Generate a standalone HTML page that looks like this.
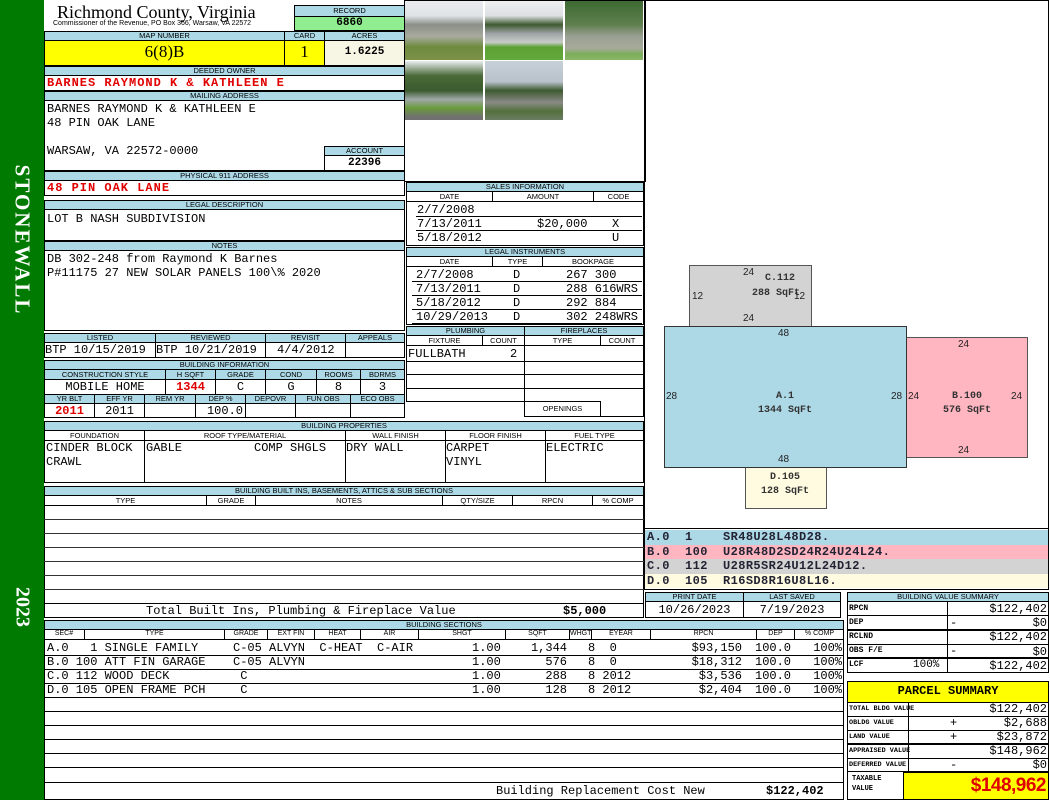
<!DOCTYPE html>
<html><head><meta charset="utf-8"><style>
*{margin:0;padding:0;box-sizing:border-box}
body{width:1050px;height:800px;background:#fff;position:relative;overflow:hidden;font-family:"Liberation Sans",sans-serif}
.a{position:absolute}
.b{position:absolute;border:1px solid #000}
.h{position:absolute;background:#add8e6;border:1px solid #000;font-size:7.5px;line-height:8px;text-align:center;color:#000;white-space:nowrap;overflow:hidden}
.m{position:absolute;font-family:"Liberation Mono",monospace;font-size:12px;line-height:14px;white-space:pre;color:#000}
.r{color:#e00000;font-weight:bold}
.l{position:absolute;background:#000}
.s{position:absolute;font-family:"Liberation Mono",monospace;font-size:8px;font-weight:bold;line-height:14px;white-space:pre}
.d{position:absolute;font-size:10px;color:#222;white-space:pre;line-height:12px}
.dm{position:absolute;font-family:"Liberation Mono",monospace;font-size:10px;font-weight:bold;color:#333;white-space:pre;line-height:12px;text-align:center}
</style></head><body>
<div class="a" style="left:0;top:0;width:44px;height:800px;background:#007a00"></div>
<div class="a" style="left:22px;top:240px;transform:translate(-50%,-50%) rotate(90deg);color:#fff;font-family:'Liberation Serif',serif;font-size:21px;font-weight:bold;letter-spacing:2px;white-space:nowrap">STONEWALL</div>
<div class="a" style="left:22px;top:607px;transform:translate(-50%,-50%) rotate(90deg);color:#fff;font-family:'Liberation Serif',serif;font-size:20px;font-weight:bold;white-space:nowrap">2023</div>

<div class="a" style="left:57px;top:2px;font-family:'Liberation Serif',serif;font-size:18px;line-height:20px">Richmond County, Virginia</div>
<div class="a" style="left:53px;top:20px;font-size:7px;line-height:8px;white-space:nowrap">Commissioner of the Revenue, PO Box 366, Warsaw, VA 22572</div>
<div class="h" style="left:294px;top:5px;width:111px;height:12px;line-height:10px">RECORD</div>
<div class="b" style="left:294px;top:16px;width:111px;height:15px;background:#90ee90"></div>
<div class="m" style="left:294px;top:16px;width:111px;text-align:center;font-weight:bold;font-size:11px">6860</div>
<div class="h" style="left:44px;top:31px;width:241px;height:10px">MAP NUMBER</div>
<div class="h" style="left:284px;top:31px;width:41px;height:10px">CARD</div>
<div class="h" style="left:324px;top:31px;width:81px;height:10px">ACRES</div>
<div class="b" style="left:44px;top:40px;width:241px;height:26px;background:#ffff00"></div>
<div class="b" style="left:284px;top:40px;width:41px;height:26px;background:#ffff00"></div>
<div class="b" style="left:324px;top:40px;width:81px;height:26px;background:#f7f5e3"></div>
<div class="a" style="left:44px;top:42px;width:241px;text-align:center;font-family:'Liberation Serif',serif;font-size:17px">6(8)B</div>
<div class="a" style="left:284px;top:42px;width:41px;text-align:center;font-family:'Liberation Serif',serif;font-size:17px">1</div>
<div class="m" style="left:324px;top:45px;width:81px;text-align:center;font-weight:bold;font-size:11px">1.6225</div>

<div class="b" style="left:44px;top:65px;width:361px;height:26px"></div>
<div class="h" style="left:44px;top:66px;width:361px;height:10px">DEEDED OWNER</div>
<div class="m r" style="left:47px;top:76px;letter-spacing:1px">BARNES RAYMOND K &amp; KATHLEEN E</div>
<div class="b" style="left:44px;top:90px;width:361px;height:81px"></div>
<div class="h" style="left:44px;top:91px;width:361px;height:10px">MAILING ADDRESS</div>
<div class="m" style="left:47px;top:102px">BARNES RAYMOND K &amp; KATHLEEN E
48 PIN OAK LANE

WARSAW, VA 22572-0000</div>
<div class="h" style="left:324px;top:146px;width:81px;height:10px">ACCOUNT</div>
<div class="b" style="left:324px;top:155px;width:81px;height:16px"></div>
<div class="m" style="left:324px;top:156px;width:81px;text-align:center;font-weight:bold;font-size:11px">22396</div>
<div class="b" style="left:44px;top:170px;width:361px;height:26px"></div>
<div class="h" style="left:44px;top:171px;width:361px;height:10px">PHYSICAL 911 ADDRESS</div>
<div class="m r" style="left:47px;top:181px;letter-spacing:1px">48 PIN OAK LANE</div>

<div class="b" style="left:44px;top:200px;width:361px;height:41px"></div>
<div class="h" style="left:44px;top:200px;width:361px;height:10px">LEGAL DESCRIPTION</div>
<div class="m" style="left:47px;top:212px">LOT B NASH SUBDIVISION</div>
<div class="b" style="left:44px;top:240px;width:361px;height:91px"></div>
<div class="h" style="left:44px;top:241px;width:361px;height:10px">NOTES</div>
<div class="m" style="left:47px;top:252px">DB 302-248 from Raymond K Barnes
P#11175 27 NEW SOLAR PANELS 100\% 2020</div>

<div class="b" style="left:44px;top:333px;width:361px;height:25px"></div>
<div class="h" style="left:44px;top:333px;width:112px;height:10px">LISTED</div>
<div class="h" style="left:155px;top:333px;width:111px;height:10px">REVIEWED</div>
<div class="h" style="left:265px;top:333px;width:81px;height:10px">REVISIT</div>
<div class="h" style="left:345px;top:333px;width:60px;height:10px">APPEALS</div>
<div class="l" style="left:155px;top:342px;width:1px;height:15px"></div>
<div class="l" style="left:265px;top:342px;width:1px;height:15px"></div>
<div class="l" style="left:345px;top:342px;width:1px;height:15px"></div>
<div class="m" style="left:45px;top:343px">BTP 10/15/2019</div>
<div class="m" style="left:156px;top:343px">BTP 10/21/2019</div>
<div class="m" style="left:277px;top:343px">4/4/2012</div>

<div class="b" style="left:44px;top:360px;width:361px;height:58px"></div>
<div class="h" style="left:44px;top:360px;width:361px;height:10px">BUILDING INFORMATION</div>
<div class="h" style="left:44px;top:369px;width:122px;height:11px;line-height:9px">CONSTRUCTION STYLE</div>
<div class="h" style="left:165px;top:369px;width:51px;height:11px;line-height:9px">H SQFT</div>
<div class="h" style="left:215px;top:369px;width:51px;height:11px;line-height:9px">GRADE</div>
<div class="h" style="left:265px;top:369px;width:52px;height:11px;line-height:9px">COND</div>
<div class="h" style="left:316px;top:369px;width:45px;height:11px;line-height:9px">ROOMS</div>
<div class="h" style="left:360px;top:369px;width:45px;height:11px;line-height:9px">BDRMS</div>
<div class="l" style="left:165px;top:379px;width:1px;height:15px"></div>
<div class="l" style="left:215px;top:379px;width:1px;height:15px"></div>
<div class="l" style="left:265px;top:379px;width:1px;height:15px"></div>
<div class="l" style="left:316px;top:379px;width:1px;height:15px"></div>
<div class="l" style="left:360px;top:379px;width:1px;height:15px"></div>
<div class="m" style="left:44px;top:380px;width:122px;text-align:center">MOBILE HOME</div>
<div class="m r" style="left:165px;top:380px;width:51px;text-align:center">1344</div>
<div class="m" style="left:215px;top:380px;width:51px;text-align:center">C</div>
<div class="m" style="left:265px;top:380px;width:52px;text-align:center">G</div>
<div class="m" style="left:316px;top:380px;width:45px;text-align:center">8</div>
<div class="m" style="left:360px;top:380px;width:45px;text-align:center">3</div>
<div class="h" style="left:44px;top:394px;width:51px;height:10px">YR BLT</div>
<div class="h" style="left:94px;top:394px;width:51px;height:10px">EFF YR</div>
<div class="h" style="left:144px;top:394px;width:52px;height:10px">REM YR</div>
<div class="h" style="left:195px;top:394px;width:51px;height:10px">DEP %</div>
<div class="h" style="left:245px;top:394px;width:51px;height:10px">DEPOVR</div>
<div class="h" style="left:295px;top:394px;width:56px;height:10px">FUN OBS</div>
<div class="h" style="left:350px;top:394px;width:55px;height:10px">ECO OBS</div>
<div class="l" style="left:94px;top:403px;width:1px;height:15px"></div>
<div class="l" style="left:144px;top:403px;width:1px;height:15px"></div>
<div class="l" style="left:195px;top:403px;width:1px;height:15px"></div>
<div class="l" style="left:245px;top:403px;width:1px;height:15px"></div>
<div class="l" style="left:295px;top:403px;width:1px;height:15px"></div>
<div class="l" style="left:350px;top:403px;width:1px;height:15px"></div>
<div class="m r" style="left:44px;top:404px;width:51px;text-align:center">2011</div>
<div class="m" style="left:94px;top:404px;width:51px;text-align:center">2011</div>
<div class="m" style="left:195px;top:404px;width:51px;text-align:right;padding-right:3px">100.0</div>

<div class="b" style="left:404px;top:0;width:242px;height:182px"></div>
<div class="a" style="left:405px;top:1px;width:78px;height:59px;background:linear-gradient(#e8ecf0 0,#dfe3e6 25%,#8a9088 40%,#a8ab9e 60%,#6e8a3e 78%,#7c9248 100%)"></div>
<div class="a" style="left:485px;top:1px;width:78px;height:59px;background:linear-gradient(#eef0f2 0,#dde0e3 25%,#3f5a30 40%,#9ea3a6 55%,#c8ccc8 70%,#5da136 78%,#63a83a 100%)"></div>
<div class="a" style="left:565px;top:1px;width:78px;height:59px;background:linear-gradient(#3d6a32 0,#5f7f4e 40%,#9aa094 60%,#a6aa9a 80%,#7cae5a 90%,#8ab866 100%)"></div>
<div class="a" style="left:405px;top:61px;width:78px;height:59px;background:linear-gradient(#e9edf0 0,#4a6a38 25%,#3b5a2e 50%,#a0a8a8 65%,#6a9a3c 80%,#707070 95%)"></div>
<div class="a" style="left:485px;top:61px;width:78px;height:59px;background:linear-gradient(#c7d0d8 0,#b9c2cb 35%,#3d5a30 50%,#8a8a86 70%,#54703c 85%,#6c7c64 100%)"></div>

<div class="b" style="left:406px;top:182px;width:238px;height:64px"></div>
<div class="h" style="left:406px;top:182px;width:238px;height:10px">SALES INFORMATION</div>
<div class="b" style="left:406px;top:191px;width:87px;height:11px;font-size:7.5px;line-height:9px;text-align:center">DATE</div>
<div class="b" style="left:492px;top:191px;width:102px;height:11px;font-size:7.5px;line-height:9px;text-align:center">AMOUNT</div>
<div class="b" style="left:593px;top:191px;width:51px;height:11px;font-size:7.5px;line-height:9px;text-align:center">CODE</div>
<div class="m" style="left:417px;top:203px;line-height:14px">2/7/2008
7/13/2011
5/18/2012</div>
<div class="l" style="left:416px;top:216px;width:226px;height:1px"></div>
<div class="l" style="left:416px;top:230px;width:226px;height:1px"></div>
<div class="m" style="left:537px;top:217px">$20,000</div>
<div class="m" style="left:612px;top:217px">X
U</div>
<div class="b" style="left:406px;top:247px;width:238px;height:78px"></div>
<div class="h" style="left:406px;top:247px;width:238px;height:10px">LEGAL INSTRUMENTS</div>
<div class="b" style="left:406px;top:256px;width:87px;height:11px;font-size:7.5px;line-height:9px;text-align:center">DATE</div>
<div class="b" style="left:492px;top:256px;width:51px;height:11px;font-size:7.5px;line-height:9px;text-align:center">TYPE</div>
<div class="b" style="left:542px;top:256px;width:102px;height:11px;font-size:7.5px;line-height:9px;text-align:center">BOOKPAGE</div>
<div class="m" style="left:416px;top:268px">2/7/2008
7/13/2011
5/18/2012
10/29/2013</div>
<div class="m" style="left:513px;top:268px">D
D
D
D</div>
<div class="m" style="left:566px;top:268px">267 300
288 616WRS
292 884
302 248WRS</div>
<div class="l" style="left:412px;top:281px;width:230px;height:1px"></div>
<div class="l" style="left:412px;top:295px;width:230px;height:1px"></div>
<div class="l" style="left:412px;top:309px;width:230px;height:1px"></div>
<div class="l" style="left:412px;top:323px;width:230px;height:1px"></div>

<div class="b" style="left:406px;top:326px;width:119px;height:76px"></div>
<div class="b" style="left:524px;top:326px;width:120px;height:91px"></div>
<div class="h" style="left:406px;top:326px;width:119px;height:10px">PLUMBING</div>
<div class="h" style="left:524px;top:326px;width:120px;height:10px">FIREPLACES</div>
<div class="b" style="left:406px;top:335px;width:77px;height:11px;font-size:7.5px;line-height:9px;text-align:center">FIXTURE</div>
<div class="b" style="left:482px;top:335px;width:43px;height:11px;font-size:7.5px;line-height:9px;text-align:center">COUNT</div>
<div class="b" style="left:524px;top:335px;width:77px;height:11px;font-size:7.5px;line-height:9px;text-align:center">TYPE</div>
<div class="b" style="left:600px;top:335px;width:44px;height:11px;font-size:7.5px;line-height:9px;text-align:center">COUNT</div>
<div class="m" style="left:408px;top:347px">FULLBATH</div>
<div class="m" style="left:510px;top:347px">2</div>
<div class="l" style="left:406px;top:361px;width:238px;height:1px"></div>
<div class="l" style="left:406px;top:374px;width:238px;height:1px"></div>
<div class="l" style="left:406px;top:388px;width:238px;height:1px"></div>
<div class="b" style="left:524px;top:401px;width:77px;height:16px;font-size:7.5px;line-height:14px;text-align:center">OPENINGS</div>

<div class="b" style="left:44px;top:421px;width:600px;height:62px"></div>
<div class="h" style="left:44px;top:421px;width:600px;height:10px">BUILDING PROPERTIES</div>
<div class="b" style="left:44px;top:430px;width:101px;height:11px;font-size:7.5px;line-height:9px;text-align:center">FOUNDATION</div>
<div class="b" style="left:144px;top:430px;width:202px;height:11px;font-size:7.5px;line-height:9px;text-align:center">ROOF TYPE/MATERIAL</div>
<div class="b" style="left:345px;top:430px;width:101px;height:11px;font-size:7.5px;line-height:9px;text-align:center">WALL FINISH</div>
<div class="b" style="left:445px;top:430px;width:101px;height:11px;font-size:7.5px;line-height:9px;text-align:center">FLOOR FINISH</div>
<div class="b" style="left:545px;top:430px;width:99px;height:11px;font-size:7.5px;line-height:9px;text-align:center">FUEL TYPE</div>
<div class="l" style="left:144px;top:440px;width:1px;height:42px"></div>
<div class="l" style="left:345px;top:440px;width:1px;height:42px"></div>
<div class="l" style="left:445px;top:440px;width:1px;height:42px"></div>
<div class="l" style="left:545px;top:440px;width:1px;height:42px"></div>
<div class="m" style="left:46px;top:441px">CINDER BLOCK
CRAWL</div>
<div class="m" style="left:146px;top:441px">GABLE          COMP SHGLS</div>
<div class="m" style="left:346px;top:441px">DRY WALL</div>
<div class="m" style="left:446px;top:441px">CARPET
VINYL</div>
<div class="m" style="left:546px;top:441px">ELECTRIC</div>

<div class="b" style="left:44px;top:486px;width:600px;height:132px"></div>
<div class="h" style="left:44px;top:486px;width:600px;height:10px">BUILDING BUILT INS, BASEMENTS, ATTICS &amp; SUB SECTIONS</div>
<div class="b" style="left:44px;top:495px;width:163px;height:11px;font-size:7.5px;line-height:9px;text-align:center">TYPE</div>
<div class="b" style="left:206px;top:495px;width:50px;height:11px;font-size:7.5px;line-height:9px;text-align:center">GRADE</div>
<div class="b" style="left:255px;top:495px;width:188px;height:11px;font-size:7.5px;line-height:9px;text-align:center">NOTES</div>
<div class="b" style="left:442px;top:495px;width:71px;height:11px;font-size:7.5px;line-height:9px;text-align:center">QTY/SIZE</div>
<div class="b" style="left:512px;top:495px;width:81px;height:11px;font-size:7.5px;line-height:9px;text-align:center">RPCN</div>
<div class="b" style="left:592px;top:495px;width:52px;height:11px;font-size:7.5px;line-height:9px;text-align:center">% COMP</div>
<div class="l" style="left:44px;top:519px;width:600px;height:1px;background:#333"></div>
<div class="l" style="left:44px;top:533px;width:600px;height:1px;background:#333"></div>
<div class="l" style="left:44px;top:547px;width:600px;height:1px;background:#333"></div>
<div class="l" style="left:44px;top:561px;width:600px;height:1px;background:#333"></div>
<div class="l" style="left:44px;top:575px;width:600px;height:1px;background:#333"></div>
<div class="l" style="left:44px;top:589px;width:600px;height:1px;background:#333"></div>
<div class="l" style="left:44px;top:603px;width:600px;height:1px"></div>
<div class="m" style="left:146px;top:604px">Total Built Ins, Plumbing &amp; Fireplace Value</div>
<div class="m" style="left:563px;top:604px;font-weight:bold">$5,000</div>

<div class="b" style="left:44px;top:620px;width:800px;height:180px"></div>
<div class="h" style="left:44px;top:620px;width:800px;height:10px">BUILDING SECTIONS</div>
<div class="a" style="left:44px;top:629px;width:800px;height:11px;border-bottom:1px solid #000;font-size:7px;line-height:10px">
<span class="a" style="left:0;width:41px;text-align:center;border-right:1px solid #000;height:10px">SEC#</span>
<span class="a" style="left:41px;width:140px;text-align:center;border-right:1px solid #000;height:10px">TYPE</span>
<span class="a" style="left:181px;width:43px;text-align:center;border-right:1px solid #000;height:10px">GRADE</span>
<span class="a" style="left:224px;width:47px;text-align:center;border-right:1px solid #000;height:10px">EXT FIN</span>
<span class="a" style="left:271px;width:46px;text-align:center;border-right:1px solid #000;height:10px">HEAT</span>
<span class="a" style="left:317px;width:58px;text-align:center;border-right:1px solid #000;height:10px">AIR</span>
<span class="a" style="left:375px;width:87px;text-align:center;border-right:1px solid #000;height:10px">SHGT</span>
<span class="a" style="left:462px;width:64px;text-align:center;border-right:1px solid #000;height:10px">SQFT</span>
<span class="a" style="left:526px;width:22px;text-align:center;border-right:1px solid #000;height:10px">WHGT</span>
<span class="a" style="left:548px;width:59px;text-align:center;border-right:1px solid #000;height:10px">EYEAR</span>
<span class="a" style="left:607px;width:106px;text-align:center;border-right:1px solid #000;height:10px">RPCN</span>
<span class="a" style="left:713px;width:38px;text-align:center;border-right:1px solid #000;height:10px">DEP</span>
<span class="a" style="left:751px;width:49px;text-align:center">% COMP</span>
</div>
<div class="m" style="left:47px;top:641px">A.0   1 SINGLE FAMILY
B.0 100 ATT FIN GARAGE
C.0 112 WOOD DECK
D.0 105 OPEN FRAME PCH</div>
<div class="m" style="left:233px;top:641px">C-05 ALVYN  C-HEAT  C-AIR
C-05 ALVYN
 C
 C</div>
<div class="m" style="left:472px;top:641px">1.00
1.00
1.00
1.00</div>
<div class="m" style="left:520px;top:641px;text-align:right;width:47px">1,344
576
288
128</div>
<div class="m" style="left:588px;top:641px">8  0
8  0
8 2012
8 2012</div>
<div class="m" style="left:680px;top:641px;text-align:right;width:62px">$93,150
$18,312
$3,536
$2,404</div>
<div class="m" style="left:755px;top:641px">100.0
100.0
100.0
100.0</div>
<div class="m" style="left:800px;top:641px;text-align:right;width:42px">100%
100%
100%
100%</div>
<div class="l" style="left:44px;top:655px;width:800px;height:1px"></div>
<div class="l" style="left:44px;top:669px;width:800px;height:1px"></div>
<div class="l" style="left:44px;top:683px;width:800px;height:1px"></div>
<div class="l" style="left:44px;top:697px;width:800px;height:1px"></div>
<div class="l" style="left:44px;top:711px;width:800px;height:1px"></div>
<div class="l" style="left:44px;top:725px;width:800px;height:1px"></div>
<div class="l" style="left:44px;top:739px;width:800px;height:1px"></div>
<div class="l" style="left:44px;top:753px;width:800px;height:1px"></div>
<div class="l" style="left:44px;top:767px;width:800px;height:1px"></div>
<div class="l" style="left:44px;top:782px;width:800px;height:1px"></div>
<div class="m" style="left:496px;top:784px">Building Replacement Cost New</div>
<div class="m" style="left:766px;top:784px;font-weight:bold">$122,402</div>

<div class="b" style="left:644px;top:0;width:405px;height:590px"></div>
<div class="a" style="left:689px;top:265px;width:123px;height:62px;background:#d3d3d3;border:1px solid #555"></div>
<div class="a" style="left:906px;top:337px;width:122px;height:121px;background:#ffb6c1;border:1px solid #555"></div>
<div class="a" style="left:745px;top:466px;width:82px;height:43px;background:#fffbe0;border:1px solid #555"></div>
<div class="a" style="left:664px;top:326px;width:243px;height:142px;background:#add8e6;border:1px solid #333"></div>
<div class="d" style="left:743px;top:267px">24</div>
<div class="dm" style="left:755px;top:273px;width:50px">C.112</div>
<div class="d" style="left:692px;top:291px">12</div>
<div class="dm" style="left:752px;top:288px">288 SqFt</div>
<div class="d" style="left:794px;top:291px">12</div>
<div class="d" style="left:743px;top:313px">24</div>
<div class="d" style="left:778px;top:328px">48</div>
<div class="d" style="left:666px;top:391px">28</div>
<div class="dm" style="left:750px;top:391px;width:70px">A.1</div>
<div class="dm" style="left:750px;top:405px;width:70px">1344 SqFt</div>
<div class="d" style="left:891px;top:391px">28</div>
<div class="d" style="left:908px;top:391px">24</div>
<div class="d" style="left:958px;top:339px">24</div>
<div class="dm" style="left:932px;top:391px;width:70px">B.100</div>
<div class="dm" style="left:932px;top:405px;width:70px">576 SqFt</div>
<div class="d" style="left:1011px;top:391px">24</div>
<div class="d" style="left:958px;top:445px">24</div>
<div class="d" style="left:778px;top:454px">48</div>
<div class="dm" style="left:750px;top:472px;width:70px">D.105</div>
<div class="dm" style="left:750px;top:486px;width:70px">128 SqFt</div>
<div class="l" style="left:644px;top:528px;width:405px;height:1px"></div>
<div class="a" style="left:645px;top:530px;width:403px;height:15px;background:#add8e6"></div>
<div class="a" style="left:645px;top:545px;width:403px;height:14px;background:#ffb6c1"></div>
<div class="a" style="left:645px;top:559px;width:403px;height:15px;background:#d3d3d3"></div>
<div class="a" style="left:645px;top:574px;width:403px;height:14px;background:#fffbe0"></div>
<div class="m" style="left:647px;top:530px;font-weight:bold;color:#223;line-height:14.5px;letter-spacing:0.4px">A.0  1    SR48U28L48D28.
B.0  100  U28R48D2SD24R24U24L24.
C.0  112  U28R5SR24U12L24D12.
D.0  105  R16SD8R16U8L16.</div>

<div class="b" style="left:645px;top:592px;width:196px;height:26px"></div>
<div class="h" style="left:645px;top:592px;width:99px;height:10px">PRINT DATE</div>
<div class="h" style="left:743px;top:592px;width:98px;height:10px">LAST SAVED</div>
<div class="l" style="left:743px;top:601px;width:1px;height:16px"></div>
<div class="m" style="left:645px;top:603px;width:99px;text-align:center">10/26/2023</div>
<div class="m" style="left:743px;top:603px;width:98px;text-align:center">7/19/2023</div>

<div class="b" style="left:847px;top:592px;width:202px;height:81px"></div>
<div class="h" style="left:847px;top:592px;width:202px;height:10px">BUILDING VALUE SUMMARY</div>
<div class="l" style="left:947px;top:601px;width:1px;height:71px"></div>
<div class="l" style="left:847px;top:615px;width:202px;height:1px"></div>
<div class="l" style="left:847px;top:629px;width:202px;height:2px"></div>
<div class="l" style="left:847px;top:644px;width:202px;height:1px"></div>
<div class="l" style="left:847px;top:657px;width:202px;height:2px"></div>
<div class="s" style="left:849px;top:602px;line-height:14px">RPCN
DEP
RCLND
OBS F/E
LCF</div>
<div class="m" style="left:913px;top:658px;font-size:11px">100%</div>
<div class="m" style="left:950px;top:616px">-

-</div>
<div class="m" style="left:950px;top:602px;width:97px;text-align:right;line-height:14.2px">$122,402
$0
$122,402
$0
$122,402</div>

<div class="b" style="left:847px;top:681px;width:202px;height:22px;background:#ffff00"></div>
<div class="m" style="left:847px;top:684px;width:202px;text-align:center;font-weight:bold">PARCEL SUMMARY</div>
<div class="b" style="left:847px;top:702px;width:202px;height:98px"></div>
<div class="l" style="left:908px;top:702px;width:1px;height:98px"></div>
<div class="l" style="left:847px;top:716px;width:202px;height:1px"></div>
<div class="l" style="left:847px;top:730px;width:202px;height:1px"></div>
<div class="l" style="left:847px;top:743px;width:202px;height:2px"></div>
<div class="l" style="left:847px;top:758px;width:202px;height:1px"></div>
<div class="l" style="left:847px;top:771px;width:202px;height:1px"></div>
<div class="s" style="left:849px;top:702px;line-height:14px;font-size:6.8px">TOTAL BLDG VALUE
OBLDG VALUE
LAND VALUE
APPRAISED VALUE
DEFERRED VALUE</div>
<div class="s" style="left:852px;top:774px;line-height:10px;font-size:7px">TAXABLE
VALUE</div>
<div class="m" style="left:950px;top:716px">+
+

-</div>
<div class="m" style="left:950px;top:702px;width:97px;text-align:right">$122,402
$2,688
$23,872
$148,962
$0</div>
<div class="a" style="left:903px;top:772px;width:146px;height:28px;background:#ffff00;border:1px solid #000"></div>
<div class="a" style="left:903px;top:772px;width:143px;text-align:right;color:#e00000;font-weight:bold;font-size:19px;line-height:28px;letter-spacing:-0.5px;font-family:'Liberation Sans Narrow','Liberation Sans',sans-serif">$148,962</div>
</body></html>
